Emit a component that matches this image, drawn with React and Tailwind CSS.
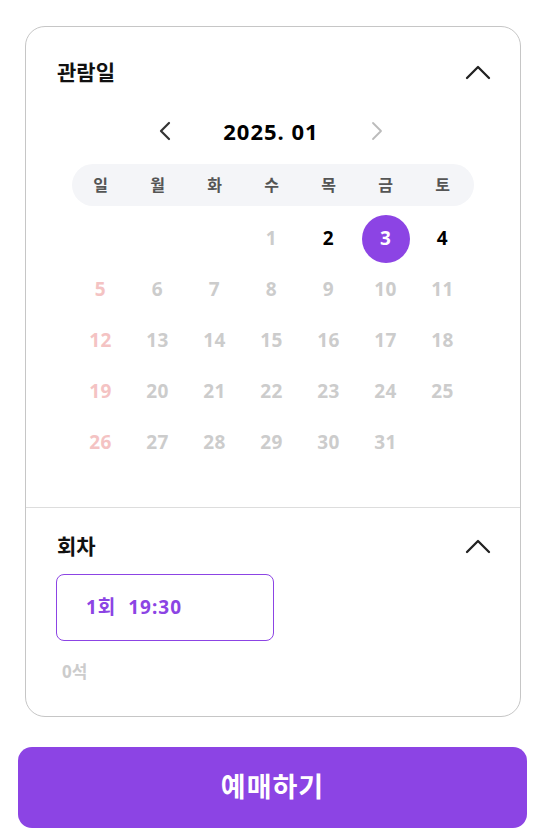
import React from "react";

const font = { fontFamily: '"Noto Sans", "Noto Sans CJK KR", sans-serif' };

function ChevronUp() {
  return (
    <svg width="26" height="16" viewBox="0 0 26 16" fill="none">
      <polyline points="2,14 13,3 24,14" stroke="#222" strokeWidth="2.3" strokeLinecap="round" strokeLinejoin="round" />
    </svg>
  );
}

function ChevronSide({ dir, color }) {
  return (
    <svg width="14" height="22" viewBox="0 0 14 22" fill="none">
      {dir === "left" ? (
        <polyline points="11,3 3,11 11,19" stroke={color} strokeWidth="2.2" strokeLinecap="round" strokeLinejoin="round" />
      ) : (
        <polyline points="3,3 11,11 3,19" stroke={color} strokeWidth="1.8" strokeLinecap="round" strokeLinejoin="round" />
      )}
    </svg>
  );
}

const weekdays = ["일", "월", "화", "수", "목", "금", "토"];

export default function App() {
  const cells = [];
  for (let i = 0; i < 3; i++) cells.push(null);
  for (let d = 1; d <= 31; d++) cells.push(d);

  return (
    <div className="w-[546px] h-[834px] bg-white" style={font}>
      <div className="pt-[26px] px-[25px]">
        <div className="border border-[#c6c6c6] rounded-[20px]">
          <div className="pt-[30px] pb-[39px]">
            <div className="flex items-center justify-between pl-[31px] pr-[29px]">
              <span className="text-[21px] leading-[30px] font-bold text-[#111]">관람일</span>
              <ChevronUp />
            </div>
            <div className="mt-[28px] flex items-center justify-center gap-[51px] h-[32px] pr-[4px]">
              <ChevronSide dir="left" color="#333" />
              <span className="text-[22px] font-bold text-black leading-[32px] tracking-[1px]">2025. 01</span>
              <ChevronSide dir="right" color="#bbbbbb" />
            </div>
            <div className="mx-auto w-[402px] mt-[17px]">
              <div className="grid grid-cols-7 h-[42px] items-center bg-[#f4f5f8] rounded-full pr-[3px]">
                {weekdays.map((w) => (
                  <div key={w} className="text-center text-[16px] font-semibold text-[#555]">{w}</div>
                ))}
              </div>
              <div className="grid grid-cols-7 mt-[7px] pr-[3px]">
                {cells.map((d, i) => {
                  if (d === null) return <div key={"e" + i} className="h-[51px]" />;
                  const sunday = i % 7 === 0;
                  let cls = "text-[#cccccc]";
                  if (sunday) cls = "text-[#f4c3c3]";
                  if (d === 2 || d === 4) cls = "text-black";
                  if (d === 3) {
                    return (
                      <div key={d} className="h-[51px] flex items-center justify-center">
                        <div className="w-[48px] h-[48px] rounded-full bg-[#8c44e4] flex items-center justify-center text-white text-[19px] font-bold">
                          {d}
                        </div>
                      </div>
                    );
                  }
                  return (
                    <div key={d} className={"h-[51px] flex items-center justify-center text-[19px] font-bold tracking-[0.5px] " + cls}>
                      {d}
                    </div>
                  );
                })}
              </div>
            </div>
          </div>
          <div className="border-t border-[#dddddd] pt-[23px] pb-[32px] pl-[30px] pr-[29px]">
            <div className="flex items-center justify-between pl-[1px]">
              <span className="text-[21px] leading-[30px] font-bold text-[#111]">회차</span>
              <ChevronUp />
            </div>
            <div className="mt-[13px] w-[218px] h-[67px] border border-[#8c44e4] rounded-[8px] flex items-center pl-[29px]">
              <span className="text-[19px] font-bold text-[#8c44e4] tracking-[1px]">1회&nbsp; 19:30</span>
            </div>
            <div className="mt-[19px] pl-[6px] text-[17px] font-bold text-[#cccccc] leading-[24px]">0석</div>
          </div>
        </div>
      </div>
      <div className="pl-[18px] pr-[19px] mt-[30px]">
        <button className="w-full h-[81px] rounded-[14px] bg-[#8c44e4] text-white text-[27px] font-bold tracking-[1px] flex items-center justify-center">
          예매하기
        </button>
      </div>
    </div>
  );
}
